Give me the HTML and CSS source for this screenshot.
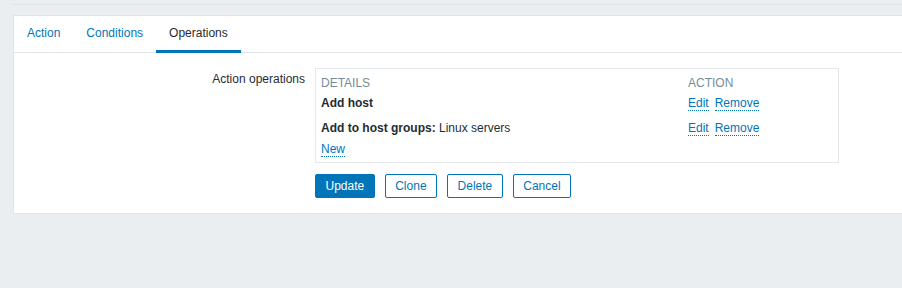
FILE: index.html
```html
<!DOCTYPE html>
<html>
<head>
<meta charset="utf-8">
<link rel="stylesheet" href="styles.css">
</head>
<body>
<div class="topline"></div>
<div class="panel">
  <ul class="tabs">
    <li class="tab"><a class="tab-link" href="#">Action</a></li>
    <li class="tab"><a class="tab-link" href="#">Conditions</a></li>
    <li class="tab tab-active"><span>Operations</span></li>
  </ul>
  <div class="form">
    <div class="form-row">
      <div class="form-label">Action operations</div>
      <div class="form-field">
        <table class="ops">
          <thead>
            <tr>
              <th class="col-details">Details</th>
              <th class="col-action">Action</th>
            </tr>
          </thead>
          <tbody>
            <tr class="row-1">
              <td><b>Add host</b></td>
              <td><a class="link link-gap" href="#">Edit</a><a class="link" href="#">Remove</a></td>
            </tr>
            <tr class="row-2">
              <td><b>Add to host groups:</b> Linux servers</td>
              <td><a class="link link-gap" href="#">Edit</a><a class="link" href="#">Remove</a></td>
            </tr>
            <tr class="row-3">
              <td colspan="2"><a class="link" href="#">New</a></td>
            </tr>
          </tbody>
        </table>
      </div>
    </div>
    <div class="form-row buttons-row">
      <div class="form-label"></div>
      <div class="buttons">
        <button class="btn btn-primary">Update</button>
        <button class="btn">Clone</button>
        <button class="btn">Delete</button>
        <button class="btn">Cancel</button>
      </div>
    </div>
  </div>
</div>
</body>
</html>
```

FILE: styles.css
```css
html, body {
  margin: 0;
  padding: 0;
}
body {
  background: #ebeef0;
  font-family: "Liberation Sans", Arial, sans-serif;
  font-size: 12px;
  line-height: 14px;
  color: #1f2c33;
  overflow: hidden;
  width: 902px;
  height: 288px;
}
.topline {
  height: 4px;
  margin-left: 13px;
  border-bottom: 1px solid #dde2e5;
}
.panel {
  margin: 10px -20px 0 13px;
  background: #ffffff;
  border: 1px solid #dfe4e7;
  padding-bottom: 15px;
}
.tabs {
  list-style: none;
  margin: 0;
  padding: 0;
  display: flex;
  border-bottom: 1px solid #dfe4e7;
}
.tab {
  padding: 10px 13px;
  border-bottom: 3px solid transparent;
  margin-bottom: -1px;
}
.tab-link {
  color: #0275b8;
  text-decoration: none;
}
.tab-active {
  border-bottom-color: #0275b8;
  color: #1f2c33;
}
.form {
  padding-top: 15px;
}
.form-row {
  display: flex;
}
.form-label {
  width: 291px;
  box-sizing: border-box;
  text-align: right;
  padding-top: 4px;
  margin-right: 10px;
  flex: none;
}
.ops {
  border: 1px solid #e4e8eb;
  border-collapse: separate;
  border-spacing: 0;
  width: 524px;
  table-layout: fixed;
}
.ops th {
  padding: 7px 5px 0;
  font-weight: normal;
  text-transform: uppercase;
  color: #768d99;
  text-align: left;
}
.ops .col-details {
  width: 357px;
}
.ops td {
  padding: 0 5px;
  vertical-align: top;
}
.ops .row-1 td {
  padding-top: 6px;
  padding-bottom: 5px;
}
.ops .row-2 td {
  padding-top: 6px;
  padding-bottom: 3px;
}
.ops .row-3 td {
  padding-top: 4px;
  padding-bottom: 6px;
}
.link {
  color: #0275b8;
  text-decoration: none;
  border-bottom: 1px dotted #0275b8;
}
.link-gap {
  margin-right: 6px;
}
.buttons-row {
  margin-top: 11px;
}
.buttons {
  display: flex;
  gap: 10px;
}
.btn {
  font-family: "Liberation Sans", Arial, sans-serif;
  font-size: 12px;
  height: 24px;
  line-height: 22px;
  padding: 0 9.5px;
  margin: 0;
  border: 1px solid #0275b8;
  border-radius: 2px;
  background: #ffffff;
  color: #0275b8;
}
.btn-primary {
  background: #0275b8;
  color: #ffffff;
}
```
